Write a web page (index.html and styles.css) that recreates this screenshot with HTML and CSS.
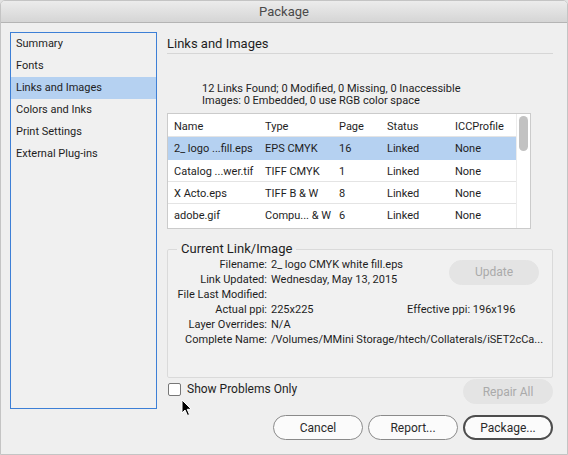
FILE: index.html
```html
<!DOCTYPE html>
<html>
<head>
<meta charset="utf-8">
<link rel="stylesheet" href="styles.css">
</head>
<body>
<div class="window">
  <div class="titlebar">Package</div>
  <div class="content">
    <ul class="sidebar">
      <li>Summary</li>
      <li>Fonts</li>
      <li class="selected">Links and Images</li>
      <li>Colors and Inks</li>
      <li>Print Settings</li>
      <li>External Plug-ins</li>
    </ul>
    <div class="main">
      <h1 class="heading">Links and Images</h1>
      <div class="summary">
        <div>12 Links Found; 0 Modified, 0 Missing, 0 Inaccessible</div>
        <div>Images: 0 Embedded, 0 use RGB color space</div>
      </div>
      <div class="table">
        <div class="rows">
          <div class="row head"><span class="c1">Name</span><span class="c2">Type</span><span class="c3">Page</span><span class="c4">Status</span><span class="c5">ICCProfile</span></div>
          <div class="row sel"><span class="c1">2_ logo ...fill.eps</span><span class="c2">EPS CMYK</span><span class="c3">16</span><span class="c4">Linked</span><span class="c5">None</span></div>
          <div class="row"><span class="c1">Catalog ...wer.tif</span><span class="c2">TIFF CMYK</span><span class="c3">1</span><span class="c4">Linked</span><span class="c5">None</span></div>
          <div class="row"><span class="c1">X Acto.eps</span><span class="c2">TIFF B &amp; W</span><span class="c3">8</span><span class="c4">Linked</span><span class="c5">None</span></div>
          <div class="row last"><span class="c1">adobe.gif</span><span class="c2">Compu... &amp; W</span><span class="c3">6</span><span class="c4">Linked</span><span class="c5">None</span></div>
        </div>
        <div class="scroll"><div class="thumb"></div></div>
      </div>
      <fieldset class="group">
        <legend>Current Link/Image</legend>
        <div class="info">
          <span class="lbl">Filename:</span><span class="val">2_ logo CMYK white fill.eps</span>
          <button class="btn disabled update">Update</button>
          <span class="lbl">Link Updated:</span><span class="val">Wednesday, May 13, 2015</span>
          <span class="lbl">File Last Modified:</span><span class="val"></span><span></span>
          <span class="lbl">Actual ppi:</span><span class="val">225x225</span><span class="val">Effective ppi: 196x196</span>
          <span class="lbl">Layer Overrides:</span><span class="val">N/A</span><span></span>
          <span class="lbl">Complete Name:</span><span class="val wide">/Volumes/MMini Storage/htech/Collaterals/iSET2cCa...</span>
        </div>
      </fieldset>
      <div class="checkrow">
        <label class="check"><span class="box"></span>Show Problems Only</label>
        <button class="btn disabled">Repair All</button>
      </div>
    </div>
  </div>
  <div class="footer">
    <button class="btn">Cancel</button>
    <button class="btn">Report...</button>
    <button class="btn default">Package...</button>
  </div>
  <svg class="cursor" width="12" height="18" viewBox="0 0 12 18"><path d="M1 1 L1 14 L4 11 L6.5 16.5 L8.5 15.6 L6.2 10.3 L10.3 10.3 Z" fill="#000" stroke="#fff" stroke-width="1"/></svg>
</div>
</body>
</html>
```
FILE: styles.css
```css
* { box-sizing: border-box; }
html, body { margin: 0; padding: 0; }
body {
  width: 568px; height: 455px; overflow: hidden;
  font-family: Roboto, "Liberation Sans", sans-serif;
  font-size: 11px; color: #1e1e1e; background: #e2e2e2;
}
.window {
  position: relative;
  width: 568px; height: 455px;
  background: #efefef;
  border: 1px solid #c4c4c4;
  border-radius: 5px 5px 0 0;
  overflow: hidden;
}
.titlebar {
  height: 22px;
  background: linear-gradient(#ececec, #d5d5d5);
  border-bottom: 1px solid #b4b4b4;
  text-align: center;
  font-size: 13px; line-height: 21px; color: #4a4a4a;
}
.content {
  display: flex;
  padding: 9px 14px 0 9px;
}
.sidebar {
  list-style: none; margin: 0; padding: 0;
  width: 148px; height: 377px;
  border: 1px solid #3d7fd6;
  background: #f0f0f0;
}
.sidebar li {
  height: 22px; line-height: 22px;
  padding-left: 5px;
}
.sidebar li.selected { background: #b5d1f1; }
.main {
  width: 386px; margin-left: 10px;
  padding-top: 3px;
  display: flex; flex-direction: column;
}
.heading {
  margin: 0; font-weight: normal;
  font-size: 13px; line-height: 17px;
  border-bottom: 1px solid #d6d6d6;
  padding-bottom: 1px;
}
.summary {
  margin-top: 29px; padding-left: 35px;
  line-height: 12px;
}
.table {
  margin-top: 6px;
  width: 364px; height: 116px;
  border: 1px solid #cbcbcb;
  background: #fff;
  display: flex;
}
.rows { flex: 1; }
.row {
  display: flex; height: 22px; line-height: 23px;
  border-bottom: 1px solid #e4e4e4;
}
.row.head { height: 23px; line-height: 25px; border-bottom: 1px solid #e4e4e4; }
.row.sel { background: #b5d1f1; border-bottom-color: #b5d1f1; height: 23px; line-height: 24px; }
.row.last { border-bottom: none; }
.row span { white-space: nowrap; }
.c1 { width: 97px; padding-left: 6px; }
.c2 { width: 74px; }
.c3 { width: 48px; }
.c4 { width: 68px; }
.c5 { flex: 1; }
.scroll {
  width: 14px;
  border-left: 1px solid #ececec;
  padding: 2px 0 0 2px;
}
.thumb {
  width: 9px; height: 35px;
  background: #c2c2c2; border-radius: 5px;
}
.group {
  margin: 12px 0 0 0;
  padding: 0 0 30px 0;
  width: 386px;
  border: 1px solid #dadada;
  border-radius: 2px;
  background: #f1f1f1;
}
.group legend {
  font-size: 13px; line-height: 16px;
  margin-left: 9px; padding: 0 4px;
}
.info {
  display: grid;
  grid-template-columns: 99px 132px 1fr;
  column-gap: 4px;
  grid-auto-rows: 15px;
  line-height: 15px;
}
.lbl { text-align: right; white-space: nowrap; }
.val { white-space: nowrap; }
.val.wide { grid-column: 2 / span 2; }
.update {
  grid-column: 3; grid-row: 1 / span 2;
  align-self: center; justify-self: end;
  margin-right: 13px;
}
.checkrow {
  margin-top: 1px;
  display: flex; justify-content: space-between; align-items: flex-start;
}
.check {
  display: flex; align-items: center;
  font-size: 12px; line-height: 14px;
  margin-top: 3px; margin-left: 1px;
}
.box {
  width: 13px; height: 13px;
  border: 1px solid #777; border-radius: 2px;
  background: #fff; margin-right: 6px;
}
.btn {
  width: 90px; height: 25px;
  border-radius: 13px;
  border: 1px solid #8a8a8a;
  background: #fbfbfb;
  font-family: Roboto, "Liberation Sans", sans-serif;
  font-size: 12px; color: #2a2a2a;
  padding: 0;
}
.btn.disabled {
  border-color: #e4e4e4; background: #e4e4e4; color: #aaaaaa;
}
.btn.default { border: 2px solid #4d4d4d; }
.footer {
  display: flex; justify-content: flex-end; gap: 5px;
  padding-right: 14px;
  margin-top: 6px;
}
.cursor { position: absolute; left: 180px; top: 398px; }
```
